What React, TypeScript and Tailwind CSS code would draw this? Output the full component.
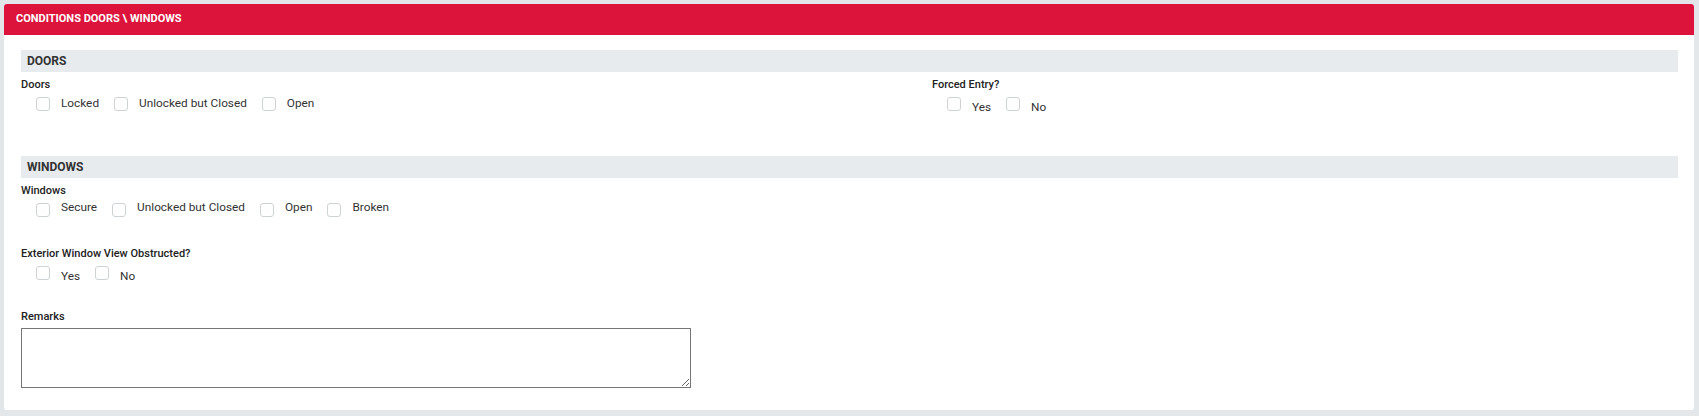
import React from "react";

function Check({ label, shift }: { label: string; shift: string }) {
  return (
    <label className="flex items-center mr-[15px]">
      <span className="w-[14px] h-[14px] rounded-[3px] border border-[#cfd2d4] bg-white shrink-0" />
      <span className={"ml-[11px] text-[11.8px] leading-[14px] text-[#333] " + shift}>{label}</span>
    </label>
  );
}

function Field({
  label,
  options,
  className = "",
  shift,
}: {
  label: string;
  options: string[];
  className?: string;
  shift: string;
}) {
  return (
    <div className={className}>
      <div className="text-[11px] leading-[14px] font-medium text-[#222]">{label}</div>
      <div className="flex pl-[15px] mt-[5px]">
        {options.map((o) => (
          <Check key={o} label={o} shift={shift} />
        ))}
      </div>
    </div>
  );
}

function Bar({ title }: { title: string }) {
  return (
    <div className="h-[22px] bg-[#e8ebee] px-[6px] flex items-center text-[12px] font-bold text-[#333]">
      {title}
    </div>
  );
}

export default function App() {
  return (
    <div
      className="w-[1699px] h-[416px] bg-[#e4e7ea] pt-[4px] pl-[4px] pr-[5px] pb-[6px]"
      style={{ fontFamily: "Roboto, 'Liberation Sans', sans-serif" }}
    >
      <div className="bg-white rounded-[3px] h-full overflow-hidden">
        <div className="h-[31px] bg-[#dc143c] flex items-center pl-[12px] text-[11px] font-bold text-white">
          CONDITIONS DOORS \ WINDOWS
        </div>
        <div className="pl-[17px] pr-[16px] pt-[15px]">
          <Bar title="DOORS" />
          <div className="flex mt-[6px]">
            <Field
              className="w-[911px]"
              label="Doors"
              shift="-translate-y-[1.5px]"
              options={["Locked", "Unlocked but Closed", "Open"]}
            />
            <Field label="Forced Entry?" shift="translate-y-[2.5px]" options={["Yes", "No"]} />
          </div>
          <div className="mt-[45px]">
            <Bar title="WINDOWS" />
          </div>
          <Field
            className="mt-[6px]"
            label="Windows"
            shift="-translate-y-[3px]"
            options={["Secure", "Unlocked but Closed", "Open", "Broken"]}
          />
          <Field
            className="mt-[30px]"
            label="Exterior Window View Obstructed?"
            shift="translate-y-[2.5px]"
            options={["Yes", "No"]}
          />
          <div className="mt-[30px] text-[11px] leading-[14px] font-medium text-[#222]">Remarks</div>
          <textarea className="mt-[4px] block w-[670px] h-[60px] border border-[#767676] bg-white" />
        </div>
      </div>
    </div>
  );
}
